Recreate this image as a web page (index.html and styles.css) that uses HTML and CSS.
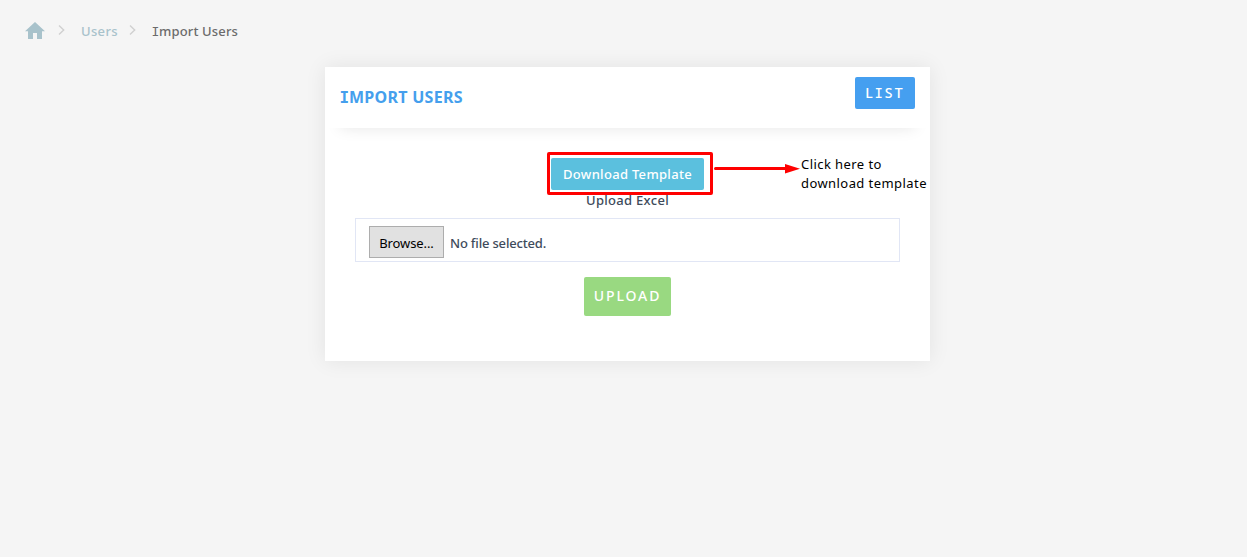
FILE: index.html
```html
<!DOCTYPE html>
<html lang="en">
<head>
<meta charset="utf-8">
<title>Import Users</title>
<link rel="stylesheet" href="styles.css">
</head>
<body>
<nav class="breadcrumb">
  <svg class="home" viewBox="0 0 20 17" width="20" height="17"><path d="M10 0L0 9.3h3V17h5v-6h4v6h5V9.3h3z"/></svg>
  <svg class="chevron" viewBox="0 0 7 10" width="7" height="10"><path d="M1 .5L5.7 5 1 9.5"/></svg>
  <a class="crumb">Users</a>
  <svg class="chevron second" viewBox="0 0 7 10" width="7" height="10"><path d="M1 .5L5.7 5 1 9.5"/></svg>
  <span class="current"><span class="slab">I</span>mport Users</span>
</nav>
<main class="card">
  <header class="card-header">
    <h1 class="title"><span class="slab">I</span>MPORT USERS</h1>
    <button class="list-button">L<span class="slab">I</span>ST</button>
  </header>
  <section class="card-body">
    <button class="template-button">Download Template</button>
    <label class="upload-label">Upload Excel</label>
    <div class="file-field">
      <button class="browse">Browse...</button>
      <span class="file-name">No file selected.</span>
    </div>
    <button class="upload-button">UPLOAD</button>
  </section>
  <div class="highlight"></div>
  <svg class="arrow" viewBox="0 0 86 10" width="86" height="10"><path d="M1.5 4.5H72" stroke="#f00" stroke-width="3" stroke-linecap="round"/><path d="M71 0L86 4.8 71 9.5z" fill="#f00"/></svg>
  <p class="note">Click here to<br>download template</p>
</main>
</body>
</html>
```
FILE: styles.css
```css
* { box-sizing: border-box; }
body {
  margin: 0;
  min-height: 557px;
  background: #f5f5f5;
  font: 500 13px/20px "Noto Sans", sans-serif;
  color: #3e4b5b;
}
button { font: inherit; border: 0; padding: 0; border-radius: 2px; white-space: nowrap; }
.slab { font-family: "DejaVu Sans Mono", monospace; line-height: 1; margin: 0 -.5px; }
.breadcrumb { display: flex; align-items: center; height: 67px; padding: 0 0 5px 25px; }
.home { margin-top: -1px; fill: #a8c2cb; }
.chevron { margin: -2px 0 0 13px; fill: none; stroke: #d0d0d0; stroke-width: 1.4; }
.crumb { width: 37px; margin-left: 16px; color: #a8c2cb; letter-spacing: .35px; }
.second { margin-left: 11px; }
.current { margin-left: 16px; color: #6b6b6b; letter-spacing: .15px; }
.card {
  position: relative;
  width: 605px;
  height: 294px;
  margin-left: 325px;
  background: #fff;
  box-shadow: 0 0 20px rgba(0, 0, 0, .08);
}
.card-header {
  display: flex;
  justify-content: space-between;
  height: 61px;
  padding: 10px 15px;
  box-shadow: 0 15px 15px -15px rgba(0, 0, 0, .1);
}
.title { margin: 10px 0 0; font-size: 16px; line-height: 20px; font-weight: 700; color: #459fed; letter-spacing: .28px; }
.list-button { width: 60px; height: 32px; background: #459ff0; color: #fff; font-size: 14px; letter-spacing: 2.3px; }
.card-body { display: flex; flex-direction: column; align-items: center; padding: 30px 30px 0; }
.template-button { width: 153px; height: 32px; background: #5bc0de; color: #fff; letter-spacing: .3px; }
.upload-label { height: 28px; letter-spacing: .3px; }
.file-field { display: flex; align-items: flex-start; width: 545px; height: 44px; padding: 7px 13px; border: 1px solid #e1e6f5; }
.browse { width: 75px; height: 32px; border: 1px solid #adadad; border-radius: 0; background: #e1e1e1; color: #000; font-weight: 400; letter-spacing: -.1px; padding-top: 2px; }
.file-name { margin: 7px 0 0 6px; letter-spacing: -.18px; }
.upload-button { width: 87px; height: 39px; margin-top: 15px; background: #99d981; color: #fff; font-size: 14px; letter-spacing: 1.9px; padding: 0 0 2px; }
.highlight { position: absolute; left: 222px; top: 85px; width: 166px; height: 43px; border: 3px solid #f00; border-radius: 2px; }
.arrow { position: absolute; left: 389px; top: 97px; }
.note { position: absolute; left: 476px; top: 88px; margin: 0; color: #000; font-weight: 400; line-height: 19px; white-space: nowrap; letter-spacing: .43px; }
```
